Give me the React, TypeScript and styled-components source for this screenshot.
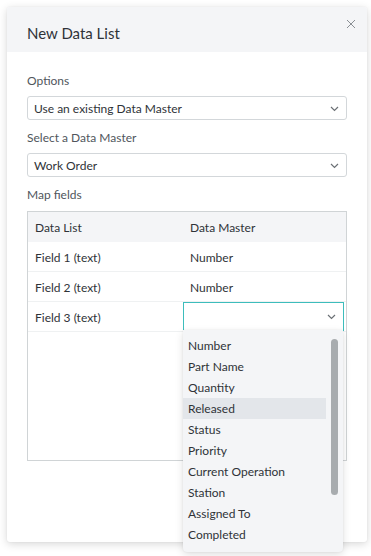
import React from "react";
import styled, { createGlobalStyle } from "styled-components";

const Global = createGlobalStyle`
  html, body { margin: 0; padding: 0; background: #ffffff; }
  body { font-family: Lato, "Open Sans", sans-serif; color: #333a40; }
  * { box-sizing: border-box; }
`;

const Page = styled.div`
  padding: 7px 4px 0 7px;
  width: 371px;
  height: 556px;
  overflow: hidden;
`;

const Modal = styled.div`
  position: relative;
  width: 360px;
  height: 535px;
  background: #fff;
  border-radius: 3px;
  box-shadow: 0 2px 8px rgba(0, 0, 0, 0.16), 0 0 2px rgba(0, 0, 0, 0.06);
  display: flex;
  flex-direction: column;
`;

const Header = styled.div`
  height: 45px;
  background: #f4f5f7;
  display: flex;
  align-items: center;
  padding: 6px 20px 0 20px;
  border-radius: 3px 3px 0 0;
`;

const Title = styled.h1`
  margin: 0;
  font-size: 15px;
  font-weight: 400;
  color: #2f3338;
`;

const Close = styled.button`
  position: absolute;
  top: 10px;
  right: 9px;
  width: 14px;
  height: 14px;
  padding: 0;
  border: none;
  background: transparent;
  display: flex;
  align-items: center;
  justify-content: center;
`;

const Body = styled.div`
  padding: 21px 20px 0 20px;
  display: flex;
  flex-direction: column;
`;

const Label = styled.div<{ $gap?: number }>`
  font-size: 12px;
  line-height: 16px;
  color: #50565c;
  margin-bottom: ${(p) => p.$gap ?? 7}px;
`;

const SelectBox = styled.div<{ $focused?: boolean; $h?: number }>`
  height: ${(p) => p.$h ?? 24}px;
  border: 1px solid ${(p) => (p.$focused ? "#3dbdbc" : "#d3d7da")};
  border-radius: ${(p) => (p.$focused ? 0 : 3)}px;
  background: #fff;
  display: flex;
  align-items: center;
  justify-content: space-between;
  padding: 1px 7px 0 6px;
  font-size: 12px;
  color: #2f3338;
  margin-bottom: 10px;
`;

const Table = styled.div`
  border: 1px solid #d0d4d6;
  height: 250px;
  display: flex;
  flex-direction: column;
`;

const Row = styled.div<{ $head?: boolean }>`
  display: grid;
  grid-template-columns: 155px 1fr;
  height: 30px;
  align-items: center;
  background: ${(p) => (p.$head ? "#f4f5f7" : "#fff")};
  border-bottom: 1px solid ${(p) => (p.$head ? "#f4f5f7" : "#eff1f2")};
  font-size: 12px;
  color: #2f3338;
`;

const Cell = styled.div`
  padding: 1px 0 0 7px;
`;

const DropCell = styled.div`
  position: relative;
  align-self: start;
  padding-right: 2px;
`;

const FieldSelect = styled(SelectBox)`
  margin-bottom: 0;
  padding-right: 7px;
`;

const Menu = styled.div`
  position: absolute;
  top: 28px;
  left: 0;
  width: 160px;
  height: 222px;
  background: #f4f5f7;
  border-radius: 0 0 4px 4px;
  box-shadow: 0 3px 8px rgba(0, 0, 0, 0.12), 0 0 2px rgba(0, 0, 0, 0.08);
  padding: 5px 17px 0 0;
  overflow: hidden;
  z-index: 5;
`;

const Item = styled.div<{ $active?: boolean }>`
  height: 21px;
  line-height: 22px;
  padding-left: 5px;
  font-size: 12px;
  color: #2f3338;
  background: ${(p) => (p.$active ? "#e3e6ea" : "transparent")};
`;

const Thumb = styled.div`
  position: absolute;
  top: 9px;
  right: 5px;
  width: 7px;
  height: 156px;
  border-radius: 4px;
  background: #a8acaf;
`;

const Chevron = () => (
  <svg width="9" height="6" viewBox="0 0 9 6" fill="none">
    <path d="M1 1l3.5 3.5L8 1" stroke="#6b7075" strokeWidth="1.2" />
  </svg>
);

const options = [
  "Number",
  "Part Name",
  "Quantity",
  "Released",
  "Status",
  "Priority",
  "Current Operation",
  "Station",
  "Assigned To",
  "Completed",
];

export default function App() {
  return (
    <Page>
      <Global />
      <Modal>
        <Header>
          <Title>New Data List</Title>
        </Header>
        <Close aria-label="Close">
          <svg width="10" height="10" viewBox="0 0 10 10">
            <path d="M1 1l8 8M9 1l-8 8" stroke="#8a8f94" strokeWidth="1" />
          </svg>
        </Close>
        <Body>
          <Label>Options</Label>
          <SelectBox>
            <span>Use an existing Data Master</span>
            <Chevron />
          </SelectBox>
          <Label>Select a Data Master</Label>
          <SelectBox>
            <span>Work Order</span>
            <Chevron />
          </SelectBox>
          <Label $gap={8}>Map fields</Label>
          <Table>
            <Row $head>
              <Cell>Data List</Cell>
              <Cell>Data Master</Cell>
            </Row>
            <Row>
              <Cell>Field 1 (text)</Cell>
              <Cell>Number</Cell>
            </Row>
            <Row>
              <Cell>Field 2 (text)</Cell>
              <Cell>Number</Cell>
            </Row>
            <Row>
              <Cell>Field 3 (text)</Cell>
              <DropCell>
                <FieldSelect $focused $h={29}>
                  <span />
                  <Chevron />
                </FieldSelect>
                <Menu>
                  {options.map((o) => (
                    <Item key={o} $active={o === "Released"}>
                      {o}
                    </Item>
                  ))}
                  <Thumb />
                </Menu>
              </DropCell>
            </Row>
          </Table>
        </Body>
      </Modal>
    </Page>
  );
}
